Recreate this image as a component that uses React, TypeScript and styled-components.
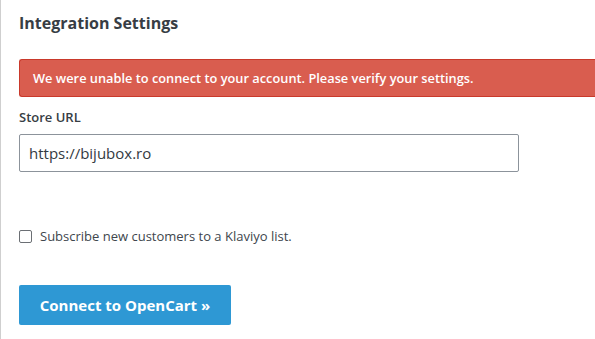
import React from "react";
import styled, { createGlobalStyle } from "styled-components";

const Global = createGlobalStyle`
  html, body { margin: 0; padding: 0; background: #fff; overflow: hidden; }
  body { font-family: "Open Sans", "Liberation Sans", sans-serif; }
`;

const Panel = styled.div`
  border-left: 1px solid #cfcfcf;
  min-height: 339px;
  box-sizing: border-box;
  padding: 12px 0 0 18px;
`;

const Title = styled.h2`
  margin: 0 0 25px;
  font-size: 16px;
  line-height: 22px;
  font-weight: 700;
  color: #373d44;
`;

const Alert = styled.div`
  box-sizing: border-box;
  height: 38px;
  background: #d95d4f;
  border: 1px solid #c9392b;
  border-right: none;
  border-radius: 3px 0 0 3px;
  color: #fff;
  font-size: 12.8px;
  font-weight: 600;
  display: flex;
  align-items: center;
  padding-left: 13px;
`;

const Label = styled.label`
  display: block;
  margin-top: 11px;
  font-size: 13px;
  line-height: 18px;
  font-weight: 600;
  color: #373d44;
`;

const Input = styled.input`
  display: block;
  box-sizing: border-box;
  margin-top: 8px;
  width: 500px;
  height: 38px;
  border: 1px solid #8c939b;
  border-radius: 2px;
  padding: 0 9px;
  font-family: inherit;
  font-size: 15px;
  color: #333a42;
  outline: none;
`;

const CheckRow = styled.label`
  display: flex;
  align-items: center;
  gap: 8px;
  margin-top: 55px;
  font-size: 13px;
  color: #40464d;
`;

const Box = styled.span`
  box-sizing: border-box;
  width: 13px;
  height: 13px;
  border: 1px solid #6b6f74;
  border-radius: 2px;
  background: #fff;
`;

const Button = styled.button`
  display: block;
  margin-top: 40px;
  width: 212px;
  height: 40px;
  border: none;
  border-radius: 2px;
  background: #2e98d4;
  color: #fff;
  font-family: inherit;
  font-size: 15px;
  font-weight: 700;
  cursor: pointer;
`;

export default function App() {
  return (
    <>
      <Global />
      <Panel>
        <Title>Integration Settings</Title>
        <Alert>We were unable to connect to your account. Please verify your settings.</Alert>
        <Label htmlFor="url">Store URL</Label>
        <Input id="url" defaultValue="https://bijubox.ro" />
        <CheckRow>
          <Box />
          Subscribe new customers to a Klaviyo list.
        </CheckRow>
        <Button>Connect to OpenCart »</Button>
      </Panel>
    </>
  );
}
